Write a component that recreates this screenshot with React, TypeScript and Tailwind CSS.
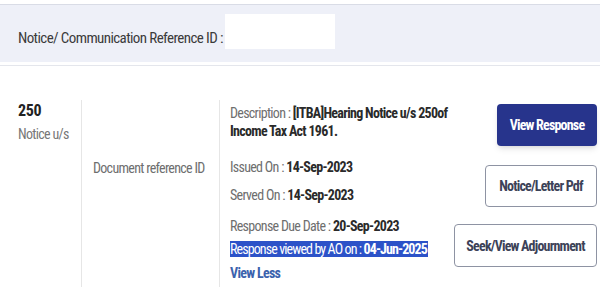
export default function App() {
  const label = 'text-[#6e6e6e]';
  const value = 'font-bold text-[#2a2a2a]';
  return (
    <div className="w-[600px] h-[300px] overflow-hidden bg-white [font-family:'Roboto_Condensed',Roboto,sans-serif] text-[14px] tracking-[-0.7px] leading-[18px]">
      {/* Header */}
      <div className="mt-[4px] h-[58px] border-t border-[#d9dce6] bg-[#eef0f8] flex items-start pl-[18px]">
        <span className="mt-[24px] text-[15px] tracking-[-0.6px] text-[#3b3b3b]">Notice/ Communication Reference ID :</span>
        <div className="mt-[9px] ml-[2px] w-[110px] h-[35px] bg-white"></div>
      </div>
      <div className="h-[4px] border-t-2 border-white border-b border-b-[#e4e6ec]"></div>

      {/* Body */}
      <div className="flex pt-[34px]">
        <div className="w-[81px] pl-[18px] h-[187px] pt-[1px]">
          <div className="text-[16px] tracking-[-0.3px] font-bold text-[#222] leading-[20px]">250</div>
          <div className="text-[#777] mt-[4px]">Notice u/s</div>
        </div>

        <div className="w-[138px] h-[187px] border-l border-[#e6e6e6] pl-[11px] pt-[59px]">
          <div className="text-[#6e6e6e]">Document reference ID</div>
        </div>

        <div className="w-[233px] h-[187px] border-l border-[#e6e6e6] pl-[10px] pt-[4px]">
          <div>
            <span className={label}>Description : </span>
            <span className={value}>[ITBA]Hearing Notice u/s 250of Income Tax Act 1961.</span>
          </div>
          <div className="mt-[18px]">
            <span className={label}>Issued On : </span>
            <span className={value}>14-Sep-2023</span>
          </div>
          <div className="mt-[10px]">
            <span className={label}>Served On : </span>
            <span className={value}>14-Sep-2023</span>
          </div>
          <div className="mt-[13px]">
            <span className={label}>Response Due Date : </span>
            <span className={value}>20-Sep-2023</span>
          </div>
          <div className="mt-[5px] whitespace-nowrap tracking-[-0.9px]">
            <span className="bg-[#2c52c8] text-white pr-[1px]">
              Response viewed by AO on : <span className="font-bold">04-Jun-2025</span>
            </span>
          </div>
          <div className="mt-[6px] text-[#3b62ad] font-bold">View Less</div>
        </div>

        <div className="flex-1 flex flex-col items-end pr-[3px] pt-[4px] text-[14px] tracking-[-0.8px]">
          <button className="w-[100px] h-[42px] rounded-[4px] bg-[#27348c] text-white font-bold shadow-md">
            View Response
          </button>
          <button className="mt-[19px] w-[112px] h-[42px] rounded-[4px] border border-[#8e93a3] bg-white text-[#3c4258] font-bold">
            Notice/Letter Pdf
          </button>
          <button className="mt-[17px] w-[143px] h-[43px] rounded-[4px] border border-[#8e93a3] bg-white text-[#3c4258] font-bold">
            Seek/View Adjournment
          </button>
        </div>
      </div>
    </div>
  );
}
